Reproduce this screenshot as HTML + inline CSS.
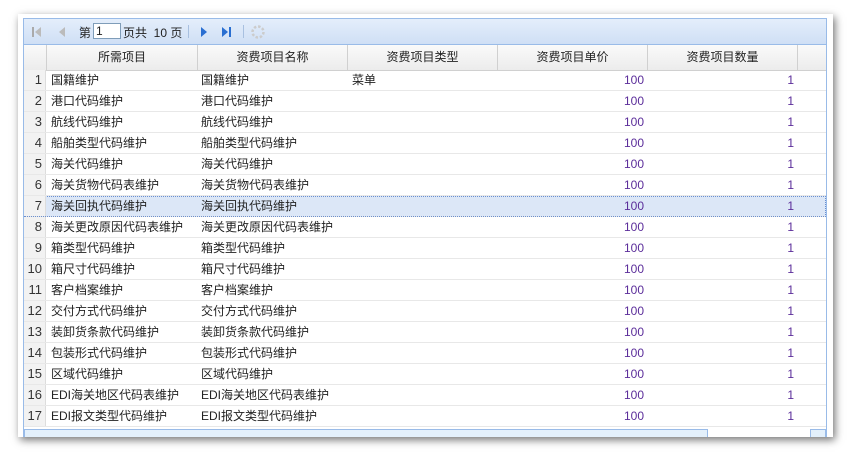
<!DOCTYPE html>
<html><head><meta charset="utf-8"><style>
body{margin:0;width:851px;height:459px;background:#fff;font-family:"Liberation Sans","Noto Sans CJK SC",sans-serif;font-size:12px;color:#222;position:relative;overflow:hidden}
.outer{position:absolute;left:18px;top:14px;width:815px;height:423px;background:#fff;box-shadow:2px 3px 8px rgba(0,0,0,.55)}
.panel{position:absolute;left:23px;top:18px;width:804px;height:419px;border:1px solid #99bbe8;border-bottom:none;box-sizing:border-box;overflow:hidden}
.tb{position:absolute;left:0;top:0;width:100%;height:25px;background:linear-gradient(#e4eefb,#cfdff5);border-bottom:1px solid #99bbe8;font-size:12px}
.tb span{position:absolute;top:5px}
.hd{position:absolute;left:0;top:26px;width:100%;height:25px;background:linear-gradient(#fafafa,#ececec);border-bottom:1px solid #d0d0d0}
.c{position:absolute;top:0;height:100%;box-sizing:border-box;border-right:1px solid #d0d0d0;text-align:center;line-height:24px;white-space:nowrap;overflow:hidden}
.row{position:absolute;left:0;width:100%;height:21px;border-bottom:1px solid #e8e8e8;box-sizing:border-box;line-height:20px}
.row div{position:absolute;top:0;white-space:nowrap;overflow:hidden}
.rn{left:0;width:22px;background:#f2f2f2;text-align:right;padding-right:3px;box-sizing:border-box;height:20px;border-right:1px solid #ddd;color:#333;font-size:13px}
.n{color:#5b2d9a}
.sel{background:#dce7f7;outline:1px dotted #6a8fd0;outline-offset:-1px}
.sb{position:absolute;left:0;top:410px;width:100%;height:10px;background:#fff}
</style></head><body>
<div class="outer"></div>
<div class="panel">
<div class="tb">
<svg style="position:absolute;left:8px;top:7px" width="60" height="12"><rect x="0" y="1" width="2" height="10" fill="#aaa"/><path d="M9 1 L3 6 L9 11Z" fill="#bbb"/><path d="M33 1 L27 6 L33 11Z" fill="#bbb"/><rect x="48" y="0" width="1" height="13" fill="#a8c0e0"/></svg>
<span style="left:55px">第</span>
<div style="position:absolute;left:69px;top:4px;width:28px;height:16px;background:#fff;border:1px solid #7f9db9;box-sizing:border-box;font-size:12px;line-height:14px;padding-left:2px">1</div>
<span style="left:99px">页共&nbsp; 10 页</span>
<svg style="position:absolute;left:164px;top:5px" width="80" height="16"><rect x="0" y="1" width="1" height="13" fill="#a8c0e0"/><path d="M13 3 L19 8 L13 13Z" fill="#2a6fd1"/><path d="M34 3 L40 8 L34 13Z" fill="#2a6fd1"/><rect x="41" y="3" width="2" height="10" fill="#2a6fd1"/><rect x="55" y="1" width="1" height="13" fill="#a8c0e0"/><circle cx="70" cy="8" r="5.5" fill="none" stroke="#ccc" stroke-width="2.5" stroke-dasharray="2.5 1.8"/></svg>
</div>
<div class="hd">
<div class="c" style="left:0;width:23px"></div>
<div class="c" style="left:23px;width:151px">所需项目</div>
<div class="c" style="left:174px;width:150px">资费项目名称</div>
<div class="c" style="left:324px;width:150px">资费项目类型</div>
<div class="c" style="left:474px;width:150px">资费项目单价</div>
<div class="c" style="left:624px;width:150px">资费项目数量</div>
</div>
<div id="rows"></div>
<div class="sb"><div style="position:absolute;left:0;top:0;width:684px;height:9px;border:1px solid #99bbe8;background:#e3f0fb;box-sizing:border-box"></div><div style="position:absolute;right:0;top:0;width:16px;height:9px;border:1px solid #99bbe8;background:#e3f0fb;box-sizing:border-box"></div></div>
</div>
<script>
var n=["国籍维护","港口代码维护","航线代码维护","船舶类型代码维护","海关代码维护","海关货物代码表维护","海关回执代码维护","海关更改原因代码表维护","箱类型代码维护","箱尺寸代码维护","客户档案维护","交付方式代码维护","装卸货条款代码维护","包装形式代码维护","区域代码维护","EDI海关地区代码表维护","EDI报文类型代码维护"];
var h="";
for(var i=0;i<17;i++){h+='<div class="row'+(i==6?' sel':'')+'" style="top:'+(51+i*21)+'px"><div class="rn">'+(i+1)+'</div><div style="left:27px;width:146px">'+n[i]+'</div><div style="left:177px;width:146px">'+n[i]+'</div><div style="left:328px">'+(i==0?'菜单':'')+'</div><div class="n" style="left:474px;width:146px;text-align:right">100</div><div class="n" style="left:624px;width:146px;text-align:right">1</div></div>';}
document.getElementById("rows").innerHTML=h;
</script>
</body></html>
